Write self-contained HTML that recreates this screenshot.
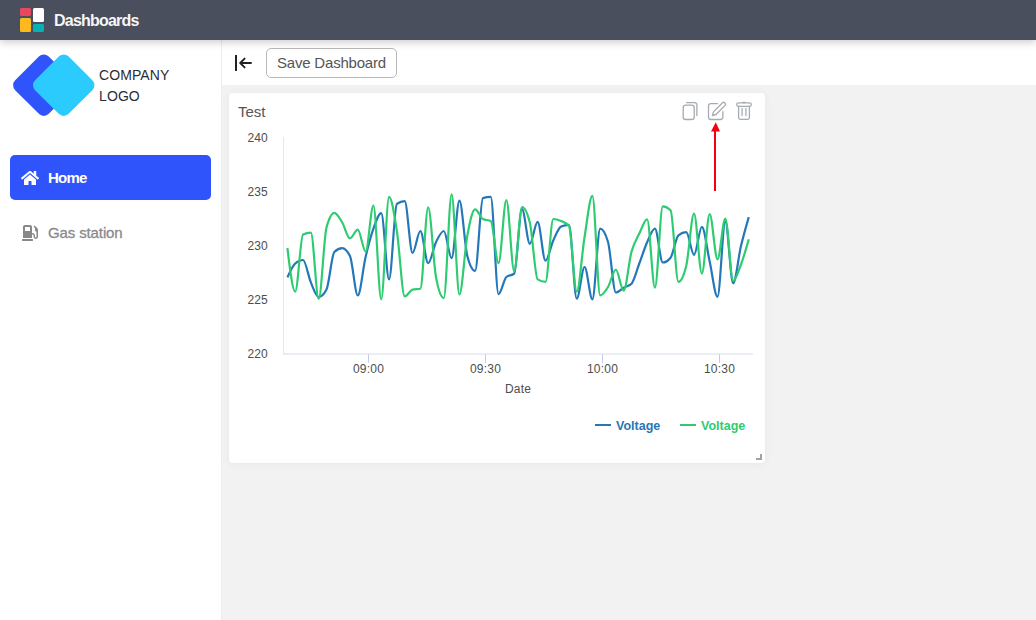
<!DOCTYPE html>
<html lang="en">
<head>
<meta charset="utf-8">
<title>Dashboards</title>
<style>
*{box-sizing:border-box;margin:0;padding:0}
html,body{width:1036px;height:620px;overflow:hidden;background:#f2f2f2;font-family:"Liberation Sans",Arial,sans-serif;}
#hdr{position:absolute;left:0;top:0;width:1036px;height:40px;background:#494f5c;z-index:5;box-shadow:0 2px 8px rgba(0,0,0,.22);}
#hdr .logo{position:absolute;left:20px;top:8px;width:24px;height:24px}
#hdr .logo i{position:absolute;border-radius:1.5px;display:block}
#hdr .ttl{position:absolute;left:54px;top:11px;font-weight:bold;font-size:16px;line-height:20px;color:#f6f6f7;letter-spacing:-0.78px}
#side{position:absolute;left:0;top:40px;width:222px;height:580px;background:#fff;border-right:1px solid #eeeeee}
#tool{position:absolute;left:222px;top:40px;width:814px;height:45px;background:#fff}
.co{position:absolute;left:99px;top:65px;font-size:14px;line-height:21px;color:#2a2d36;letter-spacing:.1px}
.nav1{position:absolute;left:10px;top:155px;width:201px;height:45px;border-radius:5px;background:#2f54fb;color:#fff;font-weight:bold;font-size:15px}
.nav1 span{position:absolute;left:38px;top:14px;line-height:18px;letter-spacing:-0.75px}
.nav2{position:absolute;left:10px;top:210px;width:201px;height:45px;color:#8a8a8a;font-size:15px}
.nav2 span{position:absolute;left:38px;top:14px;line-height:18px;letter-spacing:-0.12px;-webkit-text-stroke:.3px #8a8a8a}
.btn{position:absolute;left:266px;top:48px;width:131px;height:30px;border:1px solid #b9b9b9;border-radius:5px;background:#fff;color:#555;font-size:15px;line-height:28px;text-align:center;letter-spacing:-0.2px}
#card{position:absolute;left:229px;top:93px;width:536px;height:370px;background:#fff;border-radius:4px;box-shadow:0 1px 10px rgba(0,0,0,.05)}
.ct{position:absolute;left:238px;top:103px;font-size:15px;line-height:18px;color:#555}
svg{position:absolute;overflow:visible}
#chart text{font-family:"Liberation Sans",Arial,sans-serif;font-size:12px;fill:#4d4d4d;letter-spacing:.2px}
#chart .lg{font-weight:bold;font-size:12.5px;letter-spacing:0}
.rh{position:absolute;left:756px;top:454px;width:6px;height:6px;border-right:2px solid #a2a2a2;border-bottom:2px solid #a2a2a2}
</style>
</head>
<body>
<div id="side">
  <svg style="left:0;top:0" width="110" height="90" viewBox="0 40 110 90">
    <rect x="-23.750" y="-23.750" width="47.500" height="47.500" rx="7" transform="translate(43.8,85.2) rotate(45)" fill="#2f54fb"/>
    <rect x="-23.750" y="-23.750" width="47.500" height="47.500" rx="7" transform="translate(63.7,85.2) rotate(45)" fill="#2bcbfe"/>
  </svg>
</div>
<div class="co">COMPANY<br>LOGO</div>
<div class="nav1"><span>Home</span></div>
<svg style="left:21px;top:170px" width="18" height="16" viewBox="0 0 576 512"><path fill="#fff" d="M280.37 148.26L96 300.11V464a16 16 0 0 0 16 16l112.06-.29a16 16 0 0 0 15.92-16V368a16 16 0 0 1 16-16h64a16 16 0 0 1 16 16v95.64a16 16 0 0 0 16 16.05L464 480a16 16 0 0 0 16-16V300L295.67 148.26a12.19 12.19 0 0 0-15.3 0zM571.6 251.47L488 182.56V44.05a12 12 0 0 0-12-12h-56a12 12 0 0 0-12 12v72.61L318.47 43a48 48 0 0 0-61 0L4.34 251.47a12 12 0 0 0-1.6 16.9l25.5 31A12 12 0 0 0 45.15 301l235.22-193.74a12.19 12.19 0 0 1 15.3 0L530.9 301a12 12 0 0 0 16.9-1.6l25.5-31a12 12 0 0 0-1.7-16.93z"/></svg>
<div class="nav2"><span>Gas station</span></div>
<svg style="left:22px;top:225px" width="16" height="16" viewBox="0 0 512 512"><path fill="#888" d="M336 448H16c-8.8 0-16 7.200-16 16v32c0 8.800 7.200 16 16 16h320c8.800 0 16-7.200 16-16v-32c0-8.800-7.200-16-16-16zm157.200-340.700l-81-81c-6.200-6.200-16.400-6.200-22.600 0l-11.300 11.300c-6.200 6.200-6.200 16.400 0 22.600L416 97.900V160c0 28.100 20.900 51.300 48 55.200V376c0 13.200-10.800 24-24 24s-24-10.800-24-24v-32c0-48.600-39.400-88-88-88h-8V64c0-35.300-28.700-64-64-64H96C60.700 0 32 28.700 32 64v352h288V304h8c22.100 0 40 17.900 40 40v27.800c0 37.700 27 72 64.500 75.900 43 4.300 79.500-29.500 79.500-71.700V152.600c0-17-6.800-33.300-18.800-45.300zM256 192H96V64h160v128z"/></svg>
<div id="tool"></div>
<svg style="left:0;top:0" width="1036" height="620" viewBox="0 0 1036 620" fill="none">
  <rect x="235" y="55" width="2" height="16" fill="#222"/>
  <path d="M251 63H240.500M244.600 58.600L240.200 63L244.600 67.400" stroke="#222" stroke-width="1.900" stroke-linecap="round" stroke-linejoin="round"/>
</svg>
<div class="btn">Save Dashboard</div>
<div id="card"></div>
<div class="ct">Test</div>
<svg id="icons" style="left:0;top:0" width="1036" height="620" viewBox="0 0 1036 620" fill="none" stroke="#a6abb1" stroke-width="1.3" stroke-linecap="round" stroke-linejoin="round">
  <!-- copy -->
  <rect x="683.200" y="105.200" width="11" height="14.300" rx="2.600"/>
  <path d="M686.600 102.600H694.600a2.300 2.300 0 0 1 2.300 2.300V115.500"/>
  <!-- edit -->
  <path d="M717.500 103.700H710.800a2.300 2.300 0 0 0-2.300 2.300V117.200a2.300 2.300 0 0 0 2.300 2.300H720.600a2.300 2.300 0 0 0 2.300-2.300V111.600"/>
  <path d="M712.400 115.500L713.400 111.900L722.500 102.800a1.500 1.500 0 0 1 2.100 0l0.500 0.500a1.500 1.500 0 0 1 0 2.100L716 114.500Z"/>
  <!-- trash -->
  <rect x="736.700" y="102.900" width="14.600" height="3.400" rx="1.700"/>
  <path d="M738.600 106.300V117.600a1.800 1.800 0 0 0 1.800 1.800H747.600a1.800 1.800 0 0 0 1.800-1.800V106.300M742.100 108.300V115.600M745.900 108.300V115.600M743 102.500H745"/>
</svg>
<svg style="left:0;top:0" width="1036" height="620" viewBox="0 0 1036 620">
  <rect x="714" y="130" width="2" height="61" fill="#f5000f"/>
  <polygon points="715.800,122.300 711,131.600 720,131.600" fill="#f5000f"/>
</svg>
<svg id="chart" style="left:0;top:0" width="1036" height="620" viewBox="0 0 1036 620">
  <path d="M283.500 137V354" stroke="#e6e6e6" stroke-width="1" fill="none"/>
  <path d="M283 354H753" stroke="#d8dcea" stroke-width="1" fill="none"/>
  <path d="M368.500 354V363M485.500 354V363M602.500 354V363M719.500 354V363" stroke="#c5cdea" stroke-width="1" fill="none"/>
  <g text-anchor="end">
    <text x="268" y="141.500">240</text>
    <text x="268" y="195.700">235</text>
    <text x="268" y="250">230</text>
    <text x="268" y="304.200">225</text>
    <text x="268" y="358.400">220</text>
  </g>
  <g text-anchor="middle">
    <text x="368.500" y="373">09:00</text>
    <text x="485.500" y="373">09:30</text>
    <text x="602.500" y="373">10:00</text>
    <text x="719.500" y="373">10:30</text>
    <text x="518" y="393">Date</text>
  </g>
  <path d="M287.40 277.40C290.01 271.62 292.61 265.83 295.22 263.50C297.83 261.17 300.43 260.00 303.04 260.00C305.65 260.00 308.25 276.23 310.86 282.40C313.47 288.57 316.07 297.00 318.68 297.00C321.29 297.00 323.89 294.50 326.50 289.50C329.11 284.50 331.71 254.60 334.32 252.00C336.93 249.40 339.53 248.10 342.14 248.10C344.75 248.10 347.35 250.73 349.96 256.00C352.57 261.27 355.17 295.40 357.78 295.40C360.39 295.40 362.99 268.12 365.60 257.00C368.21 245.88 370.81 236.00 373.42 228.70C376.03 221.40 378.63 213.20 381.24 213.20C383.85 213.20 386.45 279.40 389.06 279.40C391.67 279.40 394.27 205.70 396.88 203.90C399.49 202.10 402.09 201.20 404.70 201.20C407.31 201.20 409.91 252.90 412.52 252.90C415.13 252.90 417.73 231.00 420.34 231.00C422.95 231.00 425.55 263.10 428.16 263.10C430.77 263.10 433.37 247.55 435.98 242.20C438.59 236.85 441.19 231.00 443.80 231.00C446.41 231.00 449.01 258.10 451.62 258.10C454.23 258.10 456.83 200.60 459.44 200.60C462.05 200.60 464.65 245.73 467.26 255.80C469.87 265.87 472.47 270.90 475.08 270.90C477.69 270.90 480.29 198.97 482.90 198.10C485.51 197.23 488.11 196.80 490.72 196.80C493.33 196.80 495.93 294.10 498.54 294.10C501.15 294.10 503.75 279.27 506.36 277.00C508.97 274.73 511.57 275.87 514.18 273.60C516.79 271.33 519.39 209.00 522.00 209.00C524.61 209.00 527.21 243.80 529.82 243.80C532.43 243.80 535.03 221.90 537.64 221.90C540.25 221.90 542.85 260.60 545.46 260.60C548.07 260.60 550.67 246.17 553.28 240.50C555.89 234.83 558.49 227.80 561.10 226.60C563.71 225.40 566.31 224.80 568.92 224.80C571.53 224.80 574.13 298.70 576.74 298.70C579.35 298.70 581.95 267.00 584.56 267.00C587.17 267.00 589.77 299.30 592.38 299.30C594.99 299.30 597.59 228.70 600.20 228.70C602.81 228.70 605.41 233.13 608.02 242.00C610.63 250.87 613.23 292.50 615.84 292.50C618.45 292.50 621.05 289.15 623.66 287.70C626.27 286.25 628.87 286.40 631.48 283.80C634.09 281.20 636.69 270.43 639.30 263.50C641.91 256.57 644.51 248.00 647.12 242.20C649.73 236.40 652.33 228.70 654.94 228.70C657.55 228.70 660.15 262.50 662.76 262.50C665.37 262.50 667.97 260.90 670.58 257.70C673.19 254.50 675.79 237.37 678.40 235.30C681.01 233.23 683.61 232.20 686.22 232.20C688.83 232.20 691.43 254.80 694.04 254.80C696.65 254.80 699.25 226.80 701.86 226.80C704.47 226.80 707.07 249.93 709.68 261.60C712.29 273.27 714.89 296.80 717.50 296.80C720.11 296.80 722.71 221.30 725.32 221.30C727.93 221.30 730.53 283.20 733.14 283.20C735.75 283.20 738.35 257.12 740.96 246.10C743.57 235.08 746.17 226.09 748.78 217.10" stroke="#2477b9" stroke-width="2.2" fill="none" stroke-linecap="butt"/>
  <path d="M287.40 248.00C290.01 269.80 292.61 291.60 295.22 291.60C297.83 291.60 300.43 235.77 303.04 234.50C305.65 233.23 308.25 232.60 310.86 232.60C313.47 232.60 316.07 298.90 318.68 298.90C321.29 298.90 323.89 237.30 326.50 227.50C329.11 217.70 331.71 212.80 334.32 212.80C336.93 212.80 339.53 218.03 342.14 222.30C344.75 226.57 347.35 238.40 349.96 238.40C352.57 238.40 355.17 229.70 357.78 229.70C360.39 229.70 362.99 251.50 365.60 251.50C368.21 251.50 370.81 205.50 373.42 205.50C376.03 205.50 378.63 299.30 381.24 299.30C383.85 299.30 386.45 196.80 389.06 196.80C391.67 196.80 394.27 214.40 396.88 231.00C399.49 247.60 402.09 296.40 404.70 296.40C407.31 296.40 409.91 290.20 412.52 289.60C415.13 289.00 417.73 289.30 420.34 288.70C422.95 288.10 425.55 207.40 428.16 207.40C430.77 207.40 433.37 263.00 435.98 277.00C438.59 291.00 441.19 298.00 443.80 298.00C446.41 298.00 449.01 194.30 451.62 194.30C454.23 194.30 456.83 294.50 459.44 294.50C462.05 294.50 464.65 250.20 467.26 236.00C469.87 221.80 472.47 209.30 475.08 209.30C477.69 209.30 480.29 217.67 482.90 219.00C485.51 220.33 488.11 219.67 490.72 221.00C493.33 222.33 495.93 263.10 498.54 263.10C501.15 263.10 503.75 200.10 506.36 200.10C508.97 200.10 511.57 271.30 514.18 271.30C516.79 271.30 519.39 207.00 522.00 207.00C524.61 207.00 527.21 212.17 529.82 222.50C532.43 232.83 535.03 277.73 537.64 279.40C540.25 281.07 542.85 281.90 545.46 281.90C548.07 281.90 550.67 219.00 553.28 219.00C555.89 219.00 558.49 219.87 561.10 221.00C563.71 222.13 566.31 222.60 568.92 225.80C571.53 229.00 574.13 291.60 576.74 291.60C579.35 291.60 581.95 252.97 584.56 237.00C587.17 221.03 589.77 195.80 592.38 195.80C594.99 195.80 597.59 295.40 600.20 295.40C602.81 295.40 605.41 291.28 608.02 287.00C610.63 282.72 613.23 269.70 615.84 269.70C618.45 269.70 621.05 290.60 623.66 290.60C626.27 290.60 628.87 261.42 631.48 251.90C634.09 242.38 636.69 238.92 639.30 233.50C641.91 228.08 644.51 219.40 647.12 219.40C649.73 219.40 652.33 287.70 654.94 287.70C657.55 287.70 660.15 206.40 662.76 206.40C665.37 206.40 667.97 207.70 670.58 210.30C673.19 212.90 675.79 281.90 678.40 281.90C681.01 281.90 683.61 276.60 686.22 266.00C688.83 255.40 691.43 213.60 694.04 213.60C696.65 213.60 699.25 273.60 701.86 273.60C704.47 273.60 707.07 214.20 709.68 214.20C712.29 214.20 714.89 259.30 717.50 259.30C720.11 259.30 722.71 218.60 725.32 218.60C727.93 218.60 730.53 280.90 733.14 280.90C735.75 280.90 738.35 271.43 740.96 264.50C743.57 257.57 746.17 248.43 748.78 239.30" stroke="#2ecc71" stroke-width="2.2" fill="none" stroke-linecap="butt"/>
  <rect x="595" y="424" width="16" height="2" fill="#2477b9"/>
  <text class="lg" x="616" y="430" style="fill:#2477b9">Voltage</text>
  <rect x="680" y="424" width="16" height="2" fill="#2ecc71"/>
  <text class="lg" x="701" y="430" style="fill:#2ecc71">Voltage</text>
</svg>
<div class="rh"></div>
<div id="hdr">
  <div class="logo">
    <i style="left:0;top:0;width:11px;height:8px;background:#e8475f"></i>
    <i style="left:0;top:10px;width:11px;height:14px;background:#fdba1f"></i>
    <i style="left:13px;top:0;width:11px;height:14px;background:#fff"></i>
    <i style="left:13px;top:16px;width:11px;height:8px;background:#09b1b4"></i>
  </div>
  <div class="ttl">Dashboards</div>
</div>
</body>
</html>
